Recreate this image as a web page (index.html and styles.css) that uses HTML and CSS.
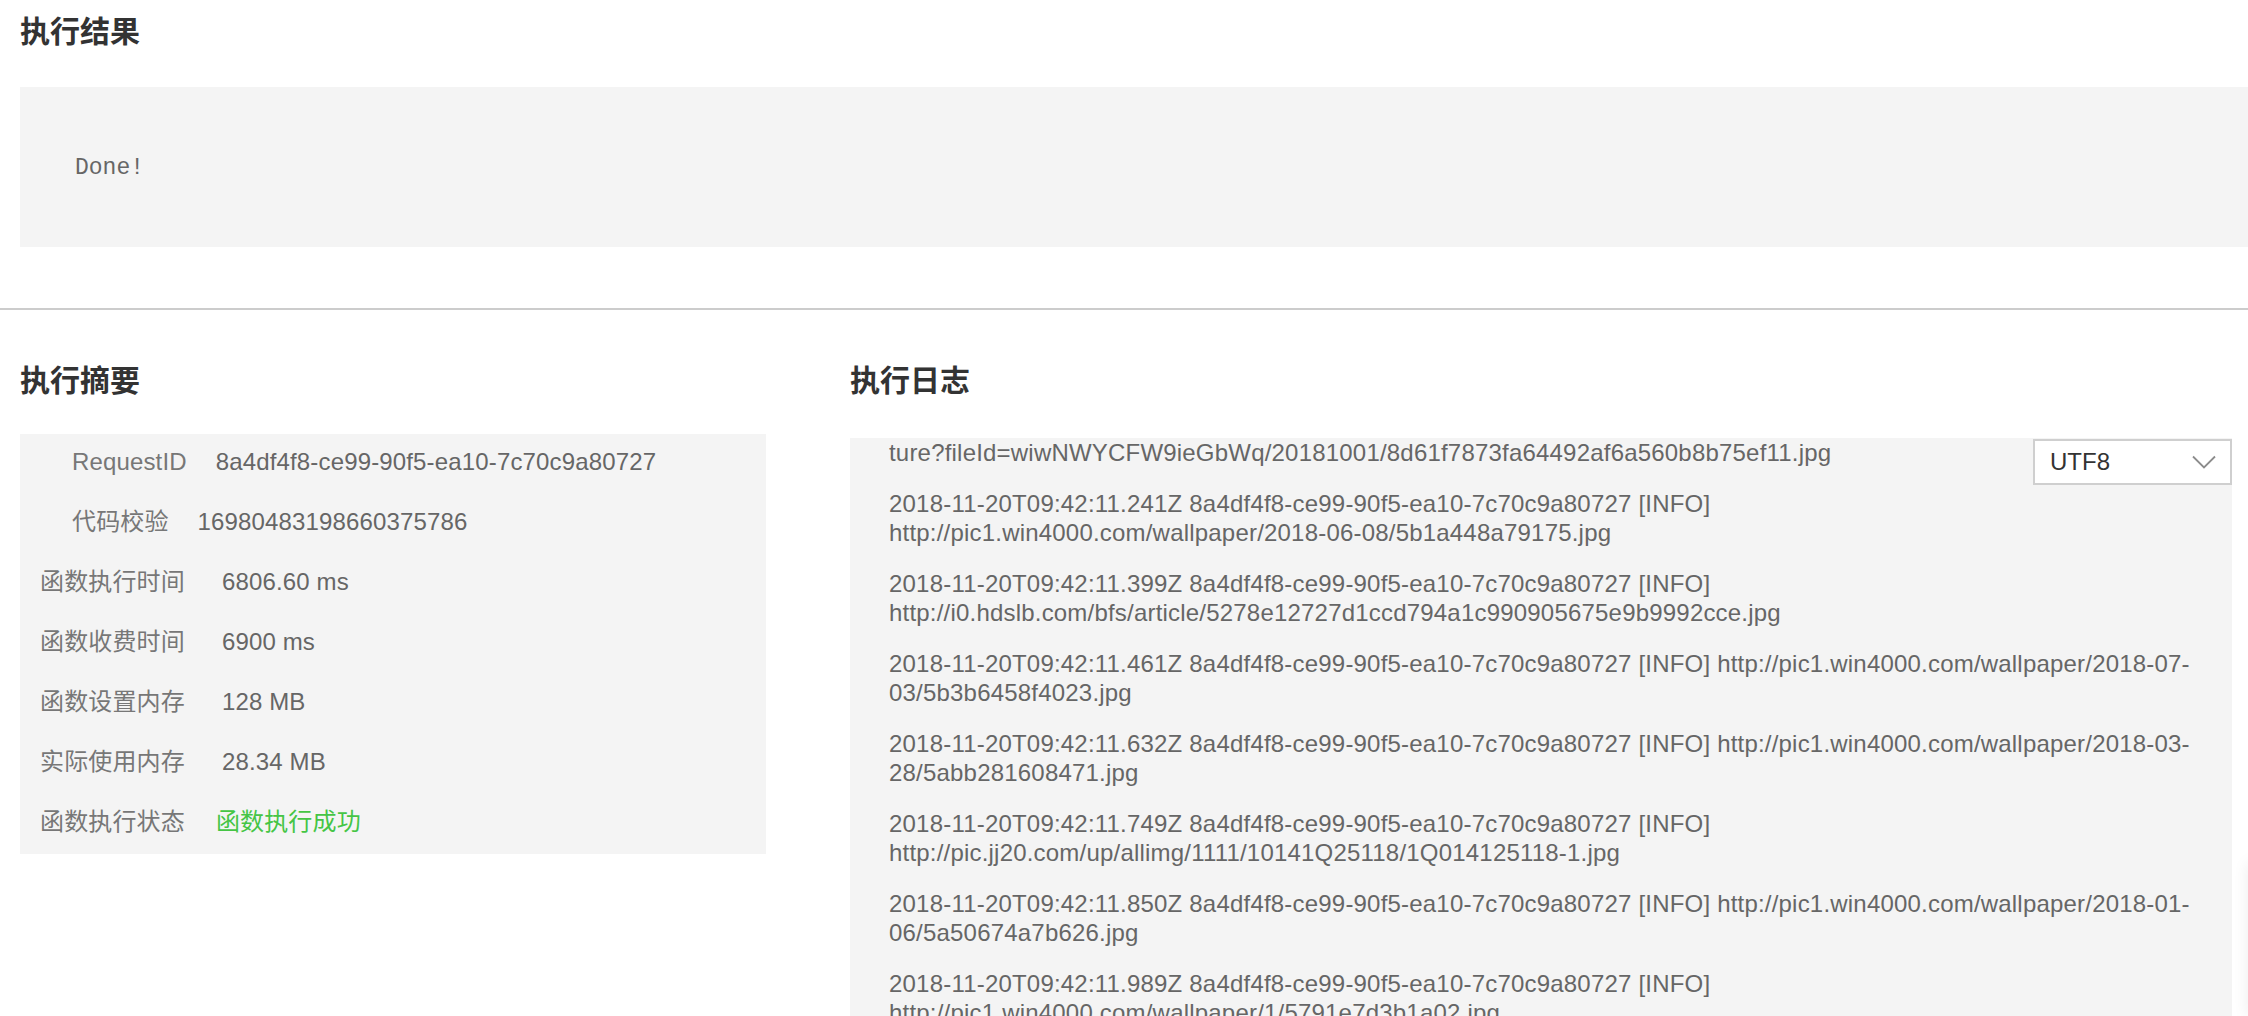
FILE: index.html
```html
<!DOCTYPE html>
<html lang="zh-CN">
<head>
    <meta charset="UTF-8">
    <meta name="viewport" content="width=device-width, initial-scale=1.0">
    <title>执行结果</title>
    <link rel="stylesheet" href="styles.css">
</head>
<body>
    <div class="result">
        <h2 class="title">执行结果</h2>
        <div class="result-box">
            <pre>Done!</pre>
        </div>
    </div>

    <div class="overview">
        <div class="summary">
            <h2 class="title">执行摘要</h2>
            <div class="summary-box">
                <div class="row indent"><span class="key">RequestID</span><span class="val">8a4df4f8-ce99-90f5-ea10-7c70c9a80727</span></div>
                <div class="row indent"><span class="key">代码校验</span><span class="val">16980483198660375786</span></div>
                <div class="row"><span class="key">函数执行时间</span><span class="val num">6806.60 ms</span></div>
                <div class="row"><span class="key">函数收费时间</span><span class="val num">6900 ms</span></div>
                <div class="row"><span class="key">函数设置内存</span><span class="val num">128 MB</span></div>
                <div class="row"><span class="key">实际使用内存</span><span class="val num">28.34 MB</span></div>
                <div class="row"><span class="key">函数执行状态</span><span class="val success">函数执行成功</span></div>
            </div>
        </div>

        <div class="logs">
            <h2 class="title">执行日志</h2>
            <div class="log-wrap">
                <div class="log-box">
                    <p>ture?fileId=wiwNWYCFW9ieGbWq/20181001/8d61f7873fa64492af6a560b8b75ef11.jpg</p>
                    <p>2018-11-20T09:42:11.241Z 8a4df4f8-ce99-90f5-ea10-7c70c9a80727 [INFO]<br>http://pic1.win4000.com/wallpaper/2018-06-08/5b1a448a79175.jpg</p>
                    <p>2018-11-20T09:42:11.399Z 8a4df4f8-ce99-90f5-ea10-7c70c9a80727 [INFO]<br>http://i0.hdslb.com/bfs/article/5278e12727d1ccd794a1c990905675e9b9992cce.jpg</p>
                    <p>2018-11-20T09:42:11.461Z 8a4df4f8-ce99-90f5-ea10-7c70c9a80727 [INFO] http://pic1.win4000.com/wallpaper/2018-07-<br>03/5b3b6458f4023.jpg</p>
                    <p>2018-11-20T09:42:11.632Z 8a4df4f8-ce99-90f5-ea10-7c70c9a80727 [INFO] http://pic1.win4000.com/wallpaper/2018-03-<br>28/5abb281608471.jpg</p>
                    <p>2018-11-20T09:42:11.749Z 8a4df4f8-ce99-90f5-ea10-7c70c9a80727 [INFO]<br>http://pic.jj20.com/up/allimg/1111/10141Q25118/1Q014125118-1.jpg</p>
                    <p>2018-11-20T09:42:11.850Z 8a4df4f8-ce99-90f5-ea10-7c70c9a80727 [INFO] http://pic1.win4000.com/wallpaper/2018-01-<br>06/5a50674a7b626.jpg</p>
                    <p>2018-11-20T09:42:11.989Z 8a4df4f8-ce99-90f5-ea10-7c70c9a80727 [INFO]<br>http://pic1.win4000.com/wallpaper/1/5791e7d3b1a02.jpg</p>
                </div>
                <div class="charset">
                    <span>UTF8</span>
                    <svg width="24" height="14" viewBox="0 0 24 14"><path d="M1 1.5 L12 12.5 L23 1.5" fill="none" stroke="#8c8c8c" stroke-width="1.8"/></svg>
                </div>
            </div>
        </div>
    </div>

    <div class="side-edge"></div>
</body>
</html>
```

FILE: styles.css
```css
* {
    margin: 0;
    padding: 0;
    box-sizing: border-box;
}

html, body {
    overflow: hidden;
}

body {
    font-family: "Liberation Sans", Arial, "Noto Sans CJK SC", sans-serif;
    font-size: 24px;
    color: #666;
    background-color: #fff;
    height: 100vh;
}

.title {
    font-family: "Noto Sans CJK SC", sans-serif;
    font-size: 30px;
    line-height: 40px;
    font-weight: 600;
    color: #333;
}

/* 执行结果 */
.result {
    padding: 9px 0 61px 20px;
    border-bottom: 2px solid #ccc;
}

.result-box {
    margin-top: 38px;
    height: 160px;
    padding-left: 55px;
    background-color: #f4f4f4;
    display: flex;
    align-items: center;
}

.result-box pre {
    font-family: "Liberation Mono", "Courier New", monospace;
    font-size: 23px;
    color: #666;
    padding-top: 2px;
}

/* 摘要 + 日志 */
.overview {
    display: flex;
    gap: 84px;
    padding: 48px 16px 0 20px;
}

.summary {
    width: 746px;
    flex-shrink: 0;
}

.summary-box {
    margin-top: 36px;
    background-color: #f4f4f4;
}

.row {
    display: flex;
    height: 60px;
    line-height: 56px;
    letter-spacing: 0.15px;
}

.row .key {
    padding-left: 20px;
    color: #777;
    font-family: "Liberation Sans", "Noto Sans CJK SC", sans-serif;
}

.row.indent .key {
    padding-left: 52px;
}

.row .val {
    margin-left: 29px;
}

.row .val.num {
    margin-left: 37px;
}

.row .val.success {
    margin-left: 31px;
    color: #45c545;
}

.logs {
    flex: 1;
    min-width: 0;
}

.log-wrap {
    position: relative;
    margin-top: 40px;
}

.log-box {
    height: 700px;
    overflow: hidden;
    padding: 0 38px 0 39px;
    background-color: #f4f4f4;
}

.log-box p {
    line-height: 29px;
    margin-bottom: 22px;
    white-space: nowrap;
    letter-spacing: 0.2px;
    color: #666;
}

.charset {
    position: absolute;
    top: 1px;
    right: 0;
    width: 199px;
    height: 46px;
    padding: 0 14px 0 15px;
    background-color: #fff;
    border: 2px solid #cfcfcf;
    display: flex;
    align-items: center;
    justify-content: space-between;
    color: #333;
}

.side-edge {
    position: fixed;
    top: 863px;
    bottom: 0;
    right: -40px;
    width: 40px;
    background-color: #fff;
    box-shadow: 0 0 16px rgba(0, 0, 0, 0.08);
}
```
